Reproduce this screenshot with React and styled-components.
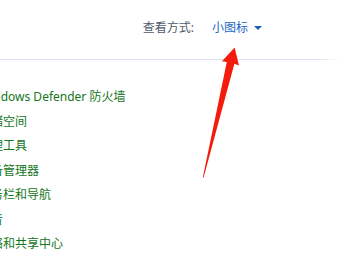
import React from "react";
import styled, { createGlobalStyle } from "styled-components";

const Global = createGlobalStyle`
  html, body { margin: 0; padding: 0; background: #ffffff; }
  body { width: 343px; height: 260px; overflow: hidden; }
  #root { width: 343px; height: 260px; overflow: hidden; position: relative; }
`;

const Page = styled.div`
  position: relative;
  width: 343px;
  height: 260px;
  overflow: hidden;
  background: #ffffff;
  font-family: "Noto Sans", "Noto Sans CJK SC", sans-serif;
`;

const Toolbar = styled.div`
  height: 59px;
  display: flex;
  align-items: center;
  justify-content: flex-end;
  padding-right: 81px;
  box-sizing: border-box;
  padding-bottom: 5px;
`;

const Label = styled.span`
  font-size: 12px;
  color: #4f5b69;
  margin-right: 18px;
`;

const ViewSelect = styled.span`
  display: inline-flex;
  align-items: center;
  font-size: 12px;
  color: #2366c4;
  gap: 6px;
`;

const Caret = styled.span`
  width: 0;
  height: 0;
  border-left: 4px solid transparent;
  border-right: 4px solid transparent;
  border-top: 4px solid #1f5cb3;
  margin-top: 1px;
`;

const Divider = styled.div`
  height: 1px;
  background: linear-gradient(to right, #d9e3ee 0, #d9e3ee 318px, #ffffff 340px);
`;

const List = styled.ul`
  list-style: none;
  margin: 25px 0 0 -21px;
  padding: 0;
`;

const Item = styled.li`
  height: 24.5px;
  line-height: 24.5px;
  font-size: 12px;
  color: #14761a;
  white-space: nowrap;
`;

const ArrowLayer = styled.svg`
  position: absolute;
  left: 0;
  top: 0;
  pointer-events: none;
`;

const items = [
  "Windows Defender 防火墙",
  "存储空间",
  "管理工具",
  "设备管理器",
  "任务栏和导航",
  "声音",
  "网络和共享中心",
];

export default function App() {
  return (
    <Page>
      <Global />
      <Toolbar>
        <Label>查看方式:</Label>
        <ViewSelect>
          小图标
          <Caret />
        </ViewSelect>
      </Toolbar>
      <Divider />
      <List>
        {items.map((t) => (
          <Item key={t}>{t}</Item>
        ))}
      </List>
      <ArrowLayer width="343" height="260" viewBox="0 0 343 260">
        <polygon
          points="202.8,177.5 226.8,62 222,61.2 234.6,47.5 239,65.4 234.4,63.8 203.6,177.5"
          fill="#f51b0c"
        />
      </ArrowLayer>
    </Page>
  );
}
